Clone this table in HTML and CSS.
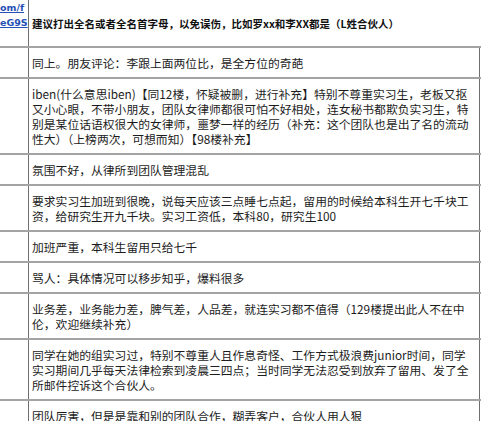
FILE: index.html
```html
<!DOCTYPE html>
<html lang="zh">
<head>
<meta charset="utf-8">
<title>合伙人</title>
<link rel="stylesheet" href="styles.css">
</head>
<body>
<div class="sheet">
  <div class="row head">
    <div class="side"><a class="link" href="#">om/f<br>eG9S</a></div>
    <div class="note">建议打出全名或者全名首字母，以免误伤，比如罗xx和李XX都是（L姓合伙人）</div>
  </div>
  <div class="row">
    <div class="side"></div>
    <div class="cell">同上。朋友评论：李跟上面两位比，是全方位的奇葩</div>
  </div>
  <div class="row">
    <div class="side"></div>
    <div class="cell">iben(什么意思iben)【同12楼，怀疑被删，进行补充】特别不尊重实习生，老板又抠<br>又小心眼，不带小朋友，团队女律师都很可怕不好相处，连女秘书都欺负实习生，特<br>别是某位话语权很大的女律师，噩梦一样的经历（补充：这个团队也是出了名的流动<br>性大）（上榜两次，可想而知）【98楼补充】</div>
  </div>
  <div class="row">
    <div class="side"></div>
    <div class="cell">氛围不好，从律所到团队管理混乱</div>
  </div>
  <div class="row">
    <div class="side"></div>
    <div class="cell">要求实习生加班到很晚，说每天应该三点睡七点起，留用的时候给本科生开七千块工<br>资，给研究生开九千块。实习工资低，本科80，研究生100</div>
  </div>
  <div class="row">
    <div class="side"></div>
    <div class="cell">加班严重，本科生留用只给七千</div>
  </div>
  <div class="row">
    <div class="side"></div>
    <div class="cell">骂人：具体情况可以移步知乎，爆料很多</div>
  </div>
  <div class="row">
    <div class="side"></div>
    <div class="cell">业务差，业务能力差，脾气差，人品差，就连实习都不值得（129楼提出此人不在中<br>伦，欢迎继续补充）</div>
  </div>
  <div class="row">
    <div class="side"></div>
    <div class="cell">同学在她的组实习过，特别不尊重人且作息奇怪、工作方式极浪费junior时间，同学<br>实习期间几乎每天法律检索到凌晨三四点；当时同学无法忍受到放弃了留用、发了全<br>所邮件控诉这个合伙人。</div>
  </div>
  <div class="row">
    <div class="side"></div>
    <div class="cell">团队厉害，但是是靠和别的团队合作，糊弄客户，合伙人用人狠</div>
  </div>
</div>
</body>
</html>
```

FILE: styles.css
```css
html, body {
  margin: 0;
  padding: 0;
  background: #ffffff;
}

.sheet {
  width: 481px;
  font-family: "Noto Sans CJK SC", "Noto Sans", sans-serif;
  color: #1c1c1c;
}

.row {
  display: grid;
  grid-template-columns: 29px 451px;
  border-top: 2px solid #a3a3a3;
}

.row.head {
  border-top: none;
  height: 46px;
}

.side {
  border-right: 1px solid #6f6f6f;
}

.link {
  display: block;
  font-family: "DejaVu Sans", sans-serif;
  font-weight: bold;
  font-size: 9.5px;
  line-height: 15px;
  color: #2550b5;
  text-decoration: underline;
  white-space: nowrap;
  overflow: hidden;
}

.note {
  display: flex;
  align-items: center;
  padding-left: 3px;
  font-size: 10.5px;
  font-weight: bold;
  color: #111;
  white-space: nowrap;
}

.cell {
  padding: 7px 0 7px 3px;
  border-right: 1px solid #6f6f6f;
  font-size: 11.8px;
  line-height: 15px;
  white-space: nowrap;
  overflow: hidden;
}
```
